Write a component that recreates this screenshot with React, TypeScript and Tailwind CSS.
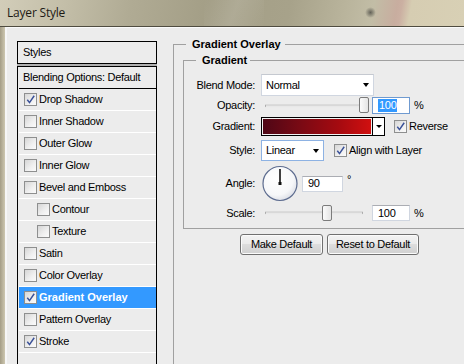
const STYLES = [
  { label: 'Drop Shadow', checked: true },
  { label: 'Inner Shadow' },
  { label: 'Outer Glow' },
  { label: 'Inner Glow' },
  { label: 'Bevel and Emboss' },
  { label: 'Contour', indent: true },
  { label: 'Texture', indent: true },
  { label: 'Satin' },
  { label: 'Color Overlay' },
  { label: 'Gradient Overlay', checked: true, active: true },
  { label: 'Pattern Overlay' },
  { label: 'Stroke', checked: true },
  { label: '', empty: true },
]

function Check({ checked = false }: { checked?: boolean }) {
  return (
    <span className="flex h-[13px] w-[13px] shrink-0 items-center justify-center border border-[#8e8f8f] bg-[linear-gradient(135deg,#d6d6d6,#f0f0f0_60%,#fbfbfb)]">
      {checked && (
        <svg viewBox="0 0 11 11" className="h-[11px] w-[11px]">
          <path d="M2.3 5.8 L4.5 8.6 L9.2 1.8" stroke="#3a5198" strokeWidth="1.5" fill="none" />
        </svg>
      )}
    </span>
  )
}

function Arrow() {
  return <span className="h-0 w-0 border-x-[3.5px] border-t-[4px] border-x-transparent border-t-black" />
}

function Slider({ thumb }: { thumb: string }) {
  return (
    <div className="relative h-full w-[111px] shrink-0">
      <div className="absolute left-[4px] top-1/2 h-[3px] w-[98px] -translate-y-1/2 rounded-[1px] border border-[#a9a9a9] border-b-[#e6e6e6] bg-[#e9e9e9]" />
      <div
        className={`absolute top-0 h-[16px] w-[10px] rounded-[2px] border border-[#7b7b7b] bg-[linear-gradient(90deg,#fbfbfb,#e4e4e4)] ${thumb}`}
      />
    </div>
  )
}

function Field({ children, width, focus }: { children: React.ReactNode; width: string; focus?: boolean }) {
  return (
    <div
      className={`flex h-full shrink-0 items-center border bg-white pl-[5px] ${width} ${
        focus ? 'border-[#6f9ad0]' : 'border-[#d0d6e0] border-t-[#abadb3]'
      }`}
    >
      {children}
    </div>
  )
}

function Row({ label, className, children }: { label: string; className: string; children: React.ReactNode }) {
  return (
    <div className={`flex items-center ${className}`}>
      <span className="w-[72px] shrink-0 pr-px text-right">{label}</span>
      <div className="ml-[5px] flex h-full items-center">{children}</div>
    </div>
  )
}

function Dial() {
  return (
    <svg width="37" height="37" viewBox="0 0 37 37" className="ml-px shrink-0">
      <defs>
        <radialGradient id="dialFill" cx="40%" cy="35%" r="70%">
          <stop offset="0%" stopColor="#ffffff" />
          <stop offset="70%" stopColor="#f6f7f9" />
          <stop offset="100%" stopColor="#d9dce4" />
        </radialGradient>
      </defs>
      <circle cx="18" cy="18.5" r="17" fill="url(#dialFill)" stroke="#5d6c8f" strokeWidth="1.2" />
      <line x1="18" y1="4" x2="18" y2="18.5" stroke="#111" strokeWidth="1.6" />
      <rect x="16.5" y="17" width="3" height="3" fill="#111" />
    </svg>
  )
}

function Button({ children, width }: { children: React.ReactNode; width: string }) {
  return (
    <button
      type="button"
      className={`h-[21px] rounded-[3px] border border-[#707070] bg-[linear-gradient(#f3f3f3,#ebebeb_45%,#dddddd_50%,#d0d0d0)] text-[11px] text-black shadow-[inset_0_0_0_1px_#fbfbfb] ${width}`}
    >
      {children}
    </button>
  )
}

export default function App() {
  return (
    <div className="relative flex h-[364px] w-[464px] flex-col overflow-hidden bg-[#ececec] font-['Liberation_Sans',Arial,sans-serif] text-[11px] tracking-[-0.3px] text-black">
      {/* Title bar */}
      <div className="relative flex h-[26px] shrink-0 items-center bg-[linear-gradient(100deg,#d2cdb9_0%,#c3bea8_14%,#b0ab94_28%,#a39e86_45%,#a7a28a_62%,#b9b49c_74%,#c2bda6_80%,#c8ad9f_85%,#cbb0a2_86%,#d6cdb2_88%,#d8d0b5_100%)] pl-[7px]">
        <span className="font-['Open_Sans',sans-serif] text-[12px] tracking-[-0.2px] text-[#1d1a14]">Layer Style</span>
        <span className="absolute left-[204px] top-0 h-[26px] w-[60px] bg-[linear-gradient(110deg,transparent,rgba(255,255,255,0.12),transparent)]" />
        <span className="absolute left-[365px] top-[7px] h-[11px] w-[11px] rounded-full bg-[radial-gradient(circle,rgba(60,60,55,0.7),rgba(60,60,55,0)_70%)]" />
      </div>
      <div className="h-px shrink-0 bg-[#4f4c40]" />

      <div className="flex min-h-0 flex-1">
        {/* Window frame */}
        <div className="w-[5px] shrink-0 bg-[linear-gradient(90deg,#a49d86,#cdc7b0)]" />
        <div className="w-[2px] shrink-0 bg-[#f6f6f6]" />

        <div className="flex flex-1 border-t border-[#fafafa] pl-[10px] pt-[13px]">
          {/* Styles list */}
          <div className="flex w-[140px] shrink-0 flex-col">
            <div className="flex h-[23px] shrink-0 items-center border border-black pl-[5px]">Styles</div>
            <div className="h-[2px] shrink-0 bg-[#b0b0b0]" />
            <div className="flex flex-1 flex-col border-x border-t border-black pl-px">
              <div className="flex h-[22px] shrink-0 items-center border-b border-black pl-[4px]">
                Blending Options: Default
              </div>
              {STYLES.map((s, i) => (
                <div
                  key={i}
                  className={`flex h-[22px] shrink-0 items-center gap-[2px] border-b border-white ${
                    s.indent ? 'pl-[18px]' : 'pl-[5px]'
                  } ${s.active ? 'bg-[#3399ff] font-bold tracking-normal text-white' : ''}`}
                >
                  {!s.empty && <Check checked={s.checked} />}
                  {s.label}
                </div>
              ))}
            </div>
          </div>

          {/* Gradient Overlay */}
          <fieldset className="ml-[16px] mt-[-4px] w-[320px] shrink-0 self-start border border-[#a0a0a0] pb-[200px] pl-[9px]">
            <legend className="ml-[3px] pl-[6px] pr-[4px] font-bold leading-[14px] tracking-normal">Gradient Overlay</legend>

            <fieldset className="mt-[2px] w-[300px] border border-[#a0a0a0] pb-[7px]">
              <legend className="ml-[12px] pl-[6px] pr-[3px] font-bold leading-[14px] tracking-normal">Gradient</legend>

              <Row label="Blend Mode:" className="mt-[7px] h-[22px]">
                <div className="flex h-full w-[113px] items-center justify-between border border-[#d0d6e0] border-t-[#c5c9d0] bg-white pl-[4px] pr-[4px]">
                  <span>Normal</span>
                  <Arrow />
                </div>
              </Row>

              <Row label="Opacity:" className="mt-px h-[17px]">
                <Slider thumb="left-[98px]" />
                <Field width="w-[38px]" focus>
                  <span className="bg-[#3399ff] px-px leading-[13px] text-white">100</span>
                </Field>
                <span className="ml-[4px]">%</span>
              </Row>

              <Row label="Gradient:" className="mt-[3px] h-[19px]">
                <div className="flex h-full w-[124px] border border-black">
                  <div className="flex-1 border border-[#f2f2f2] bg-[linear-gradient(90deg,#4f0716,#7a0a14_35%,#a50a10_70%,#d11010)]" />
                  <div className="flex w-[12px] items-center justify-center border-l border-black bg-white">
                    <span className="h-0 w-0 border-x-[3px] border-t-[3px] border-x-transparent border-t-black" />
                  </div>
                </div>
                <span className="ml-[9px] flex items-center gap-[2px]">
                  <Check checked />
                  Reverse
                </span>
              </Row>

              <Row label="Style:" className="mt-[4px] h-[21px]">
                <div className="flex h-full w-[63px] items-center justify-between border border-[#8db2e3] bg-white pl-[4px] pr-[4px]">
                  <span>Linear</span>
                  <Arrow />
                </div>
                <span className="ml-[10px] flex items-center gap-[2px]">
                  <Check checked />
                  Align with Layer
                </span>
              </Row>

              <Row label="Angle:" className="mt-[4px] h-[37px]">
                <Dial />
                <div className="ml-[3px] h-[16px]">
                  <Field width="w-[41px]">90</Field>
                </div>
                <span className="ml-[4px] self-start pt-[9px] leading-none">°</span>
              </Row>

              <Row label="Scale:" className="mt-[3px] h-[16px]">
                <Slider thumb="left-[61px]" />
                <Field width="w-[38px]">100</Field>
                <span className="ml-[4px]">%</span>
              </Row>
            </fieldset>

            <div className="ml-[57px] mt-[5px] flex gap-[4px]">
              <Button width="w-[83px]">Make Default</Button>
              <Button width="w-[92px]">Reset to Default</Button>
            </div>
          </fieldset>
        </div>
      </div>
    </div>
  )
}
